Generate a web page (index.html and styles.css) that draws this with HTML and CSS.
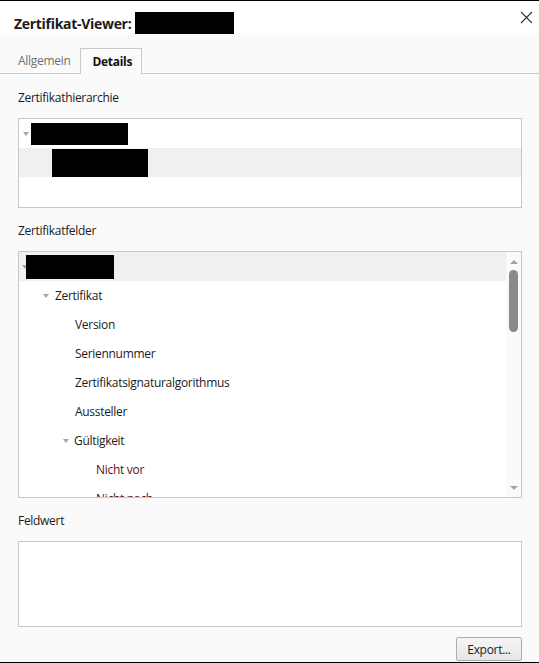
FILE: index.html
```html
<!DOCTYPE html>
<html lang="de">
<head>
<meta charset="utf-8">
<title>Zertifikat-Viewer</title>
<link rel="stylesheet" href="styles.css">
</head>
<body>
<div class="window">
  <header class="titlebar">
    <h1 class="title">Zertifikat-Viewer: <span class="redact redact-title"></span></h1>
    <span class="close" aria-label="Schließen">
      <svg width="13" height="13" viewBox="0 0 13 13"><path d="M1 1 L12 12 M12 1 L1 12" stroke="#333" stroke-width="1.1" fill="none"/></svg>
    </span>
  </header>
  <div class="content">
    <nav class="tabs">
      <span class="tab">Allgemein</span>
      <span class="tab active">Details</span>
    </nav>
    <main class="pane">
      <div class="label">Zertifikathierarchie</div>
      <div class="box hierarchy">
        <div class="row lvl0"><span class="twisty"></span><span class="redact redact-h1"></span></div>
        <div class="row lvl1 selected"><span class="redact redact-h2"></span></div>
      </div>

      <div class="label">Zertifikatfelder</div>
      <div class="box fields">
        <div class="tree">
          <div class="row lvl0 selected"><span class="twisty"></span><span class="redact redact-f1"></span></div>
          <div class="row lvl1"><span class="twisty"></span><span class="text">Zertifikat</span></div>
          <div class="row lvl2"><span class="text">Version</span></div>
          <div class="row lvl2"><span class="text">Seriennummer</span></div>
          <div class="row lvl2"><span class="text">Zertifikatsignaturalgorithmus</span></div>
          <div class="row lvl2"><span class="text">Aussteller</span></div>
          <div class="row lvl2"><span class="twisty"></span><span class="text">Gültigkeit</span></div>
          <div class="row lvl3"><span class="text warn">Nicht vor</span></div>
          <div class="row lvl3"><span class="text warn">Nicht nach</span></div>
        </div>
        <div class="scrollbar">
          <span class="arrow up"></span>
          <span class="thumb"></span>
          <span class="spacer"></span>
          <span class="arrow down"></span>
        </div>
      </div>

      <div class="label">Feldwert</div>
      <div class="box value"></div>

      <div class="actions">
        <button class="btn">Export...</button>
      </div>
    </main>
  </div>
</div>
</body>
</html>
```

FILE: styles.css
```css
html, body {
  margin: 0;
  padding: 0;
  background: #fafafa;
}
body {
  font-family: "Open Sans", "Noto Sans", "DejaVu Sans", sans-serif;
  font-size: 12px;
  letter-spacing: -0.3px;
  color: #1b1b1b;
}
.window {
  width: 539px;
  height: 663px;
  box-sizing: border-box;
  border-top: 1px solid #000;
  border-bottom: 1px solid #000;
  display: flex;
  flex-direction: column;
  overflow: hidden;
}
.titlebar {
  height: 32px;
  background: #fff;
  display: flex;
  align-items: center;
  justify-content: space-between;
  padding: 0 6px 0 14px;
  flex: none;
}
.title {
  margin: 0;
  font-size: 14px;
  font-weight: 700;
  color: #1a1a1a;
  display: flex;
  align-items: center;
  gap: 4px;
  position: relative;
  top: 6px;
}
.close {
  display: flex;
  align-self: flex-start;
  margin-top: 10px;
}
.redact {
  display: inline-block;
  background: #000;
}
.redact-title { width: 99px; height: 22px; }
.redact-h1 { width: 97px; height: 22px; }
.redact-h2 { width: 96px; height: 28px; }
.redact-f1 { width: 88px; height: 24px; }

.content {
  flex: 1;
  display: flex;
  flex-direction: column;
  background: #fafafa;
}
.tabs {
  display: flex;
  align-items: flex-end;
  height: 41px;
  box-sizing: border-box;
  padding-left: 10px;
  border-bottom: 1px solid #c9c9c9;
  flex: none;
}
.tab {
  height: 25px;
  display: flex;
  align-items: center;
  padding: 0 10px 0 8px;
  color: #707070;
  box-sizing: border-box;
}
.tab.active {
  color: #111;
  font-weight: 700;
  border: 1px solid #c9c9c9;
  border-bottom: none;
  height: 26px;
  margin-bottom: -1px;
  background: #fafafa;
  padding: 0 9px 0 11px;
}
.pane {
  display: flex;
  flex-direction: column;
  padding: 14px 17px 0 18px;
}
.label {
  height: 20px;
  line-height: 20px;
  margin-bottom: 10px;
  color: #1b1b1b;
}
.box {
  background: #fff;
  border: 1px solid #c8c8c8;
  box-sizing: border-box;
  margin-bottom: 13px;
}
.hierarchy { height: 90px; }
.fields {
  height: 247px;
  display: flex;
  overflow: hidden;
}
.value { height: 86px; margin-bottom: 10px; }

.tree {
  flex: 1;
  overflow: hidden;
}
.row {
  height: 29px;
  display: flex;
  align-items: center;
  white-space: nowrap;
}
.row.selected { background: #f0f0f0; }
.twisty {
  width: 0;
  height: 0;
  border-left: 3.5px solid transparent;
  border-right: 3.5px solid transparent;
  border-top: 4px solid #a6a6a6;
  margin-right: 6px;
  flex: none;
}
.hierarchy .lvl0 { padding-left: 4px; }
.hierarchy .lvl0 .twisty { margin-right: 2px; }
.hierarchy .lvl1 { padding-left: 33px; }
.fields .lvl0 { padding-left: 3px; }
.fields .lvl0 .twisty { margin-right: -2px; }
.fields .lvl1 { padding-left: 24px; }
.fields .lvl2 { padding-left: 56px; }
.fields .lvl2 .twisty { margin-left: -12px; margin-right: 5px; }
.fields .lvl3 { padding-left: 77px; }
.text { line-height: 29px; }
.warn { color: #5a1212; }

.scrollbar {
  width: 15px;
  flex: none;
  background: #fafafa;
  display: flex;
  flex-direction: column;
  align-items: center;
}
.arrow {
  width: 0;
  height: 0;
  border-left: 4px solid transparent;
  border-right: 4px solid transparent;
  flex: none;
}
.arrow.up {
  border-bottom: 4px solid #a3a3a3;
  margin-top: 8px;
}
.arrow.down {
  border-top: 4px solid #a3a3a3;
  margin-bottom: 7px;
}
.thumb {
  width: 9px;
  height: 62px;
  border-radius: 4.5px;
  background: #8a8a8a;
  margin-top: 6px;
  flex: none;
}
.spacer { flex: 1; }

.actions {
  display: flex;
  justify-content: flex-end;
}
.btn {
  font-family: inherit;
  font-size: 12px;
  letter-spacing: -0.3px;
  color: #1b1b1b;
  height: 24px;
  width: 66px;
  padding: 0;
  border: 1px solid #adadad;
  border-radius: 2px;
  background: linear-gradient(#f6f6f6, #e6e6e6);
}
```
